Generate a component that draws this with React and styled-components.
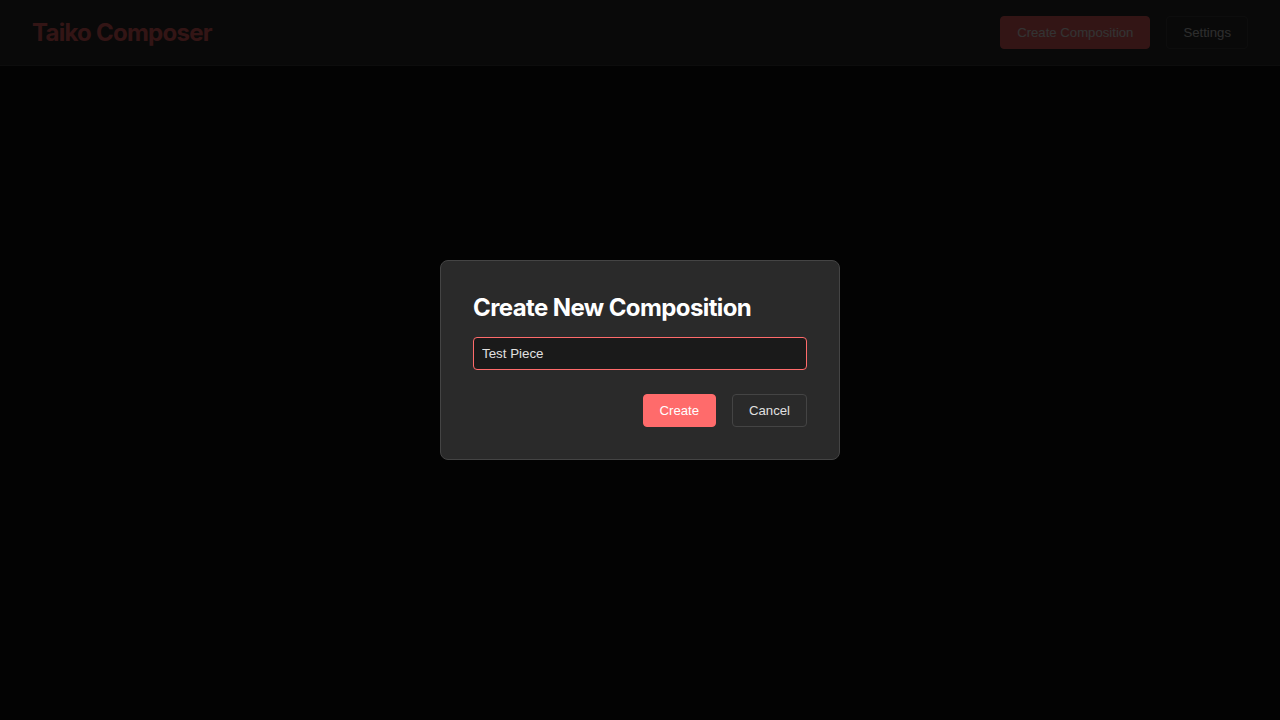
import styled, { createGlobalStyle } from "styled-components";

const GlobalStyle = createGlobalStyle`
    body {
        margin: 0;
        background-color: #121212;
        color: #e0e0e0;
        font-family: "Liberation Sans", Arial, sans-serif;
    }
`;

const Page = styled.div`
    min-height: 100vh;
`;

const Header = styled.header`
    display: flex;
    justify-content: space-between;
    align-items: center;
    padding: 16px 32px;
    background-color: #2d2d2d;
    border-bottom: 1px solid #444;
`;

const Logo = styled.h1`
    margin: 0;
    font-family: Inter, "Liberation Sans", sans-serif;
    font-size: 24px;
    font-weight: 700;
    letter-spacing: -0.75px;
    color: #ff6b6b;
`;

const Actions = styled.div`
    display: flex;
    gap: 16px;
`;

const Button = styled.button`
    font-family: "Liberation Sans", Arial, sans-serif;
    font-size: 13.17px;
    line-height: 15px;
    padding: 8px 16px;
    border-radius: 4px;
    cursor: pointer;
    border: 1px solid ${(p) => (p.$primary ? "#ff6b6b" : "#444")};
    background-color: ${(p) => (p.$primary ? "#ff6b6b" : "transparent")};
    color: ${(p) => (p.$primary ? "#ffffff" : "#e0e0e0")};
`;

const Overlay = styled.div`
    position: fixed;
    inset: 0;
    background-color: rgba(0, 0, 0, 0.8);
    display: flex;
    align-items: center;
    justify-content: center;
`;

const Modal = styled.div`
    width: 400px;
    box-sizing: border-box;
    padding: 32px;
    background-color: #2a2a2a;
    border: 1px solid #444;
    border-radius: 8px;
`;

const Title = styled.h2`
    margin: 0 0 15px;
    font-family: Inter, "Liberation Sans", sans-serif;
    font-size: 24px;
    font-weight: 700;
    line-height: 29px;
    letter-spacing: -0.6px;
    color: #ffffff;
`;

const Input = styled.input`
    display: block;
    width: 100%;
    box-sizing: border-box;
    padding: 8px;
    font-family: "Liberation Sans", Arial, sans-serif;
    font-size: 13.33px;
    line-height: 15px;
    color: #e0e0e0;
    background-color: #1a1a1a;
    border: 1px solid #ff6b6b;
    border-radius: 4px;
    outline: none;
`;

const ModalActions = styled.div`
    display: flex;
    justify-content: flex-end;
    gap: 16px;
    margin-top: 24px;
`;

function App() {
    return (
        <Page>
            <GlobalStyle />
            <Header>
                <Logo>Taiko Composer</Logo>
                <Actions>
                    <Button $primary>Create Composition</Button>
                    <Button>Settings</Button>
                </Actions>
            </Header>
            <Overlay>
                <Modal>
                    <Title>Create New Composition</Title>
                    <Input defaultValue="Test Piece" />
                    <ModalActions>
                        <Button $primary>Create</Button>
                        <Button>Cancel</Button>
                    </ModalActions>
                </Modal>
            </Overlay>
        </Page>
    );
}

export default App;
